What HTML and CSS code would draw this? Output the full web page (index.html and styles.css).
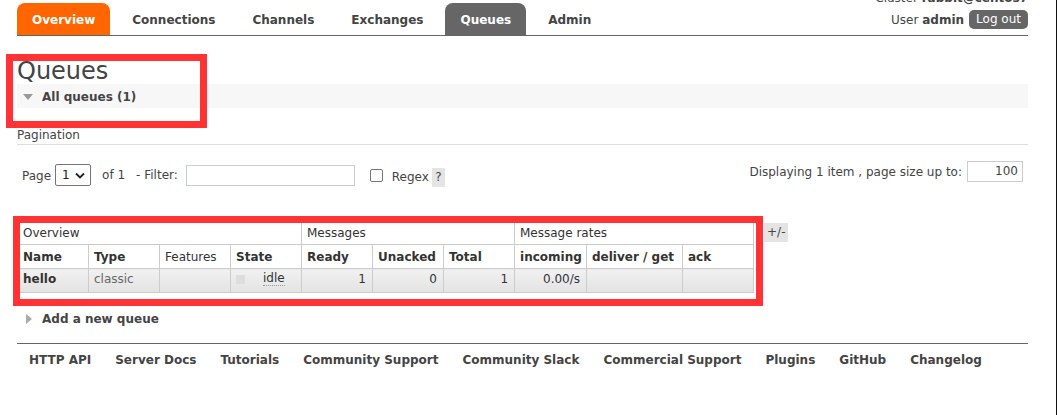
FILE: index.html
```html
<!DOCTYPE html>
<html lang="en">
<head>
<meta charset="utf-8">
<title>RabbitMQ Management</title>
<link rel="stylesheet" href="styles.css">
</head>
<body>
<div class="frame">
  <header class="topbar">
    <nav class="tabs">
      <a class="tab tab-overview" href="#">Overview</a>
      <a class="tab" href="#">Connections</a>
      <a class="tab" href="#">Channels</a>
      <a class="tab" href="#">Exchanges</a>
      <a class="tab tab-active" href="#">Queues</a>
      <a class="tab" href="#">Admin</a>
    </nav>
    <div class="login">
      <div class="cluster">Cluster <b>rabbit@centos7</b></div>
      <div class="user-row">
        <span>User <b>admin</b></span>
        <button class="logout" type="button">Log out</button>
      </div>
    </div>
  </header>

  <main class="main">
    <h1 class="title">Queues</h1>
    <div class="section-h">
      <span class="tri-down"></span>
      <span class="section-label">All queues (1)</span>
    </div>

    <div class="pag-label">Pagination</div>
    <div class="pag-row">
      <div class="pag-left">
        <span>Page</span>
        <span class="select"><span>1</span>
          <svg width="10" height="7" viewBox="0 0 10 7"><path d="M1 1.5 L5 5.5 L9 1.5" fill="none" stroke="#222" stroke-width="1.8"/></svg>
        </span>
        <span class="of">of 1</span>
        <span class="filter-l">- Filter:</span>
        <span class="input filter-in"></span>
        <span class="checkbox"></span>
        <span class="regex">Regex</span>
        <span class="help">?</span>
      </div>
      <div class="pag-right">
        <span>Displaying 1 item , page size up to:</span>
        <span class="input size-in">100</span>
      </div>
    </div>

    <div class="table-wrap">
      <table class="list">
        <colgroup>
          <col style="width:71px"><col style="width:71px"><col style="width:71px"><col style="width:71px">
          <col style="width:71px"><col style="width:71px"><col style="width:71px">
          <col style="width:72px"><col style="width:96px"><col style="width:71px">
        </colgroup>
        <thead>
          <tr class="group">
            <th colspan="4">Overview</th>
            <th colspan="3">Messages</th>
            <th colspan="3">Message rates</th>
          </tr>
          <tr class="cols">
            <th>Name</th><th>Type</th><th class="normal">Features</th><th>State</th>
            <th>Ready</th><th>Unacked</th><th>Total</th>
            <th>incoming</th><th>deliver / get</th><th>ack</th>
          </tr>
        </thead>
        <tbody>
          <tr class="row">
            <td class="name">hello</td>
            <td class="muted">classic</td>
            <td></td>
            <td><span class="state"><span class="sq"></span><abbr class="idle">idle</abbr></span></td>
            <td class="num">1</td>
            <td class="num">0</td>
            <td class="num">1</td>
            <td class="num">0.00/s</td>
            <td></td>
            <td></td>
          </tr>
        </tbody>
      </table>
      <span class="plusminus">+/-</span>
    </div>

    <div class="add-row">
      <span class="tri-right"></span>
      <span class="section-label">Add a new queue</span>
    </div>
  </main>

  <footer class="footer">
    <a href="#">HTTP API</a>
    <a href="#">Server Docs</a>
    <a href="#">Tutorials</a>
    <a href="#">Community Support</a>
    <a href="#">Community Slack</a>
    <a href="#">Commercial Support</a>
    <a href="#">Plugins</a>
    <a href="#">GitHub</a>
    <a href="#">Changelog</a>
  </footer>

  <div class="mark mark-1"></div>
  <div class="mark mark-2"></div>
</div>
</body>
</html>
```

FILE: styles.css
```css
* { box-sizing: border-box; }

html, body {
  margin: 0;
  padding: 0;
  background: #fff;
}

body {
  font-family: "DejaVu Sans", Verdana, sans-serif;
  font-size: 12px;
  color: #444;
  overflow: hidden;
}

.frame {
  position: relative;
  width: 1057px;
  min-height: 415px;
  border-right: 1px solid #111;
}

a { color: #444; text-decoration: none; }

/* ---------- header ---------- */
.topbar {
  display: flex;
  align-items: flex-end;
  height: 36px;
  margin: 0 28px 0 17px;
  border-bottom: 1px solid #666;
}

.tabs {
  display: flex;
  gap: 7px;
}

.tab {
  display: block;
  height: 32px;
  line-height: 32px;
  padding: 1px 15px 0;
  font-weight: bold;
  color: #444;
  border-radius: 8px 8px 0 0;
}

.tab-overview { background: #f60; color: #fff; }
.tab-active { background: #666; color: #fff; }

.login {
  margin-left: auto;
  align-self: flex-start;
  text-align: right;
}

.cluster {
  line-height: 14px;
  margin-top: -9px;
}

.user-row {
  display: flex;
  align-items: center;
  justify-content: flex-end;
  gap: 5px;
  margin-top: 5px;
}

.logout {
  height: 19px;
  padding: 0 7px;
  border: 0;
  border-radius: 5px;
  background: #666;
  color: #fff;
  font-family: inherit;
  font-size: 12px;
  line-height: 19px;
}

/* ---------- main ---------- */
.main {
  margin: 0 28px 0 17px;
}

.title {
  margin: 22px 0 0;
  font-size: 24px;
  font-weight: normal;
  line-height: 26px;
  color: #444;
}

.section-h {
  display: flex;
  align-items: center;
  height: 24px;
  padding: 1px 0 0 6px;
  background: #f7f7f7;
}

.section-label {
  font-weight: bold;
  color: #444;
}

.tri-down {
  width: 0;
  height: 0;
  border-left: 5px solid transparent;
  border-right: 5px solid transparent;
  border-top: 6px solid #999;
  margin-right: 9px;
}

.tri-right {
  width: 0;
  height: 0;
  border-top: 5px solid transparent;
  border-bottom: 5px solid transparent;
  border-left: 6px solid #aaa;
  margin-right: 10px;
}

.pag-label {
  margin-top: 19px;
  line-height: 17px;
  border-bottom: 1px solid #ddd;
}

.pag-row {
  display: flex;
  align-items: flex-start;
  justify-content: space-between;
}

.pag-left {
  display: flex;
  align-items: center;
  height: 22px;
  margin-top: 19px;
  padding-left: 5px;
}

.pag-left > span:first-child { margin-top: 2px; }

.select {
  display: flex;
  align-items: center;
  justify-content: space-between;
  width: 36px;
  height: 22px;
  margin-left: 4px;
  padding: 0 5px 0 6px;
  border: 1px solid #767676;
  border-radius: 2px;
  color: #222;
}

.of { margin-left: 11px; }
.filter-l { margin-left: 11px; }

.input {
  display: block;
  height: 21px;
  border: 1px solid #ccc;
  background: #fff;
}

.filter-in {
  width: 169px;
  margin-left: 8px;
}

.checkbox {
  width: 13px;
  height: 13px;
  margin-left: 15px;
  border: 1px solid #767676;
  border-radius: 2px;
}

.regex { margin-left: 9px; margin-top: 4px; }

.help {
  width: 13px;
  height: 19px;
  margin-left: 3px;
  margin-top: 5px;
  background: #e4e4e4;
  line-height: 19px;
  text-align: center;
}

.pag-right {
  display: flex;
  align-items: center;
  gap: 5px;
  margin-top: 16px;
  margin-right: 5px;
}

.size-in {
  width: 56px;
  padding-right: 4px;
  line-height: 19px;
  text-align: right;
}

/* ---------- table ---------- */
.table-wrap {
  display: flex;
  align-items: flex-start;
  margin-top: 35px;
}

.list {
  border-collapse: collapse;
  table-layout: fixed;
  width: 736px;
  color: #333;
}

.list th, .list td {
  border: 1px solid #ccc;
  padding: 0 5px;
  text-align: left;
  white-space: nowrap;
  overflow: hidden;
}

.group th {
  height: 23px;
  font-weight: normal;
}

.cols th {
  height: 24px;
  font-weight: bold;
}

.cols th.normal { font-weight: normal; }

.row td {
  height: 24px;
  background: linear-gradient(#f1f1f1, #e3e3e3);
  padding-bottom: 3px;
}

.row td.name { font-weight: bold; }
.row td.muted { color: #666; }
.row td.num { text-align: right; padding-right: 6px; }

.state {
  display: flex;
  align-items: center;
}

.sq {
  width: 9px;
  height: 9px;
  background: #ddd;
}

.idle {
  margin-left: 18px;
  text-decoration: none;
  border-bottom: 1px dotted #999;
  line-height: 13px;
}

.plusminus {
  margin-left: 10px;
  margin-top: 2px;
  padding: 0 3px;
  height: 19px;
  line-height: 19px;
  background: #e4e4e4;
}

.add-row {
  display: flex;
  align-items: center;
  height: 16px;
  margin-top: 18px;
  padding-left: 9px;
}

/* ---------- footer ---------- */
.footer {
  display: flex;
  margin: 16px 28px 0 17px;
  padding-top: 8px;
  border-top: 1px solid #666;
}

.footer a {
  padding: 0 12px;
  line-height: 16px;
  font-weight: bold;
}

/* ---------- annotation boxes ---------- */
.mark {
  position: absolute;
  border: 7px solid #f33;
  pointer-events: none;
}

.mark-1 { left: 6px; top: 54px; width: 201px; height: 74px; }
.mark-2 { left: 13px; top: 216px; width: 750px; height: 90px; }
```
